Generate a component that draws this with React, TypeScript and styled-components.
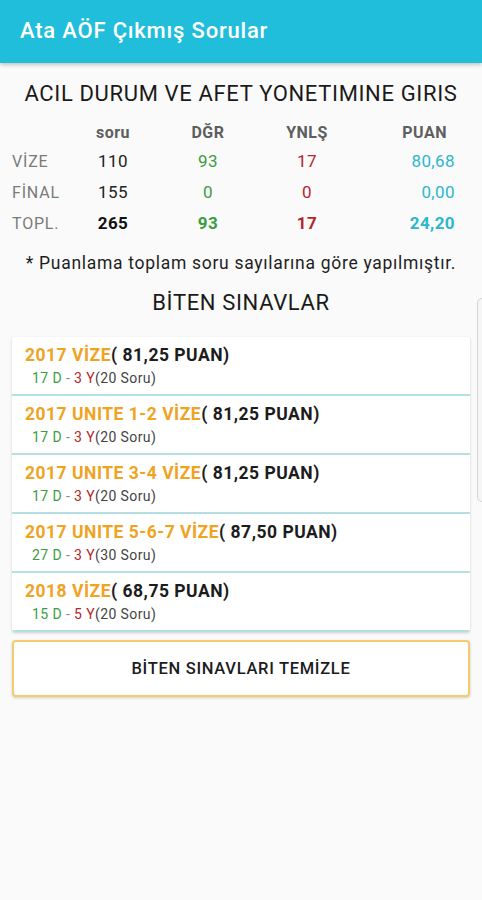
import React from 'react';
import styled, { createGlobalStyle } from 'styled-components';

const GlobalStyle = createGlobalStyle`
  html, body {
    margin: 0;
    padding: 0;
    background: #fafafa;
    font-family: Roboto, "Noto Sans", "Liberation Sans", sans-serif;
  }
`;

const Screen = styled.div`
  position: relative;
  width: 482px;
  min-height: 900px;
  background: #fafafa;
  overflow: hidden;
`;

const AppBar = styled.div`
  height: 63px;
  background: #21bedb;
  display: flex;
  align-items: center;
  padding-left: 20px;
  box-shadow: 0 2px 4px rgba(0, 0, 0, 0.22);
  position: relative;
  z-index: 1;
`;

const AppTitle = styled.h1`
  margin: 0;
  color: #fff;
  font-size: 22px;
  letter-spacing: 0.8px;
  font-weight: 500;
  padding-bottom: 2px;
`;

const Content = styled.div`
  padding: 0 12px;
  display: flex;
  flex-direction: column;
`;

const Heading = styled.div<{ $top: number }>`
  text-align: center;
  font-size: 22px;
  letter-spacing: 0.65px;
  color: #1a1a1a;
  margin-top: ${(p) => p.$top}px;
  line-height: 28px;
`;

const StatsGrid = styled.div`
  display: grid;
  grid-template-columns: 71px 60px 130px 68px 1fr;
  margin-top: 12px;
`;

const HeadCell = styled.div<{ $align?: string }>`
  height: 26px;
  line-height: 26px;
  font-size: 16px;
  letter-spacing: 0.5px;
  font-weight: 700;
  color: #5e5e5e;
  text-align: ${(p) => p.$align || 'center'};
  padding-right: ${(p) => (p.$align === 'right' ? '23px' : '0')};
`;

const Cell = styled.div<{ $color: string; $bold?: boolean; $align?: string }>`
  height: 31px;
  line-height: 31px;
  font-size: 17px;
  letter-spacing: 0.4px;
  color: ${(p) => p.$color};
  font-weight: ${(p) => (p.$bold ? 700 : 400)};
  text-align: ${(p) => p.$align || 'center'};
  padding-right: ${(p) => (p.$align === 'right' ? '15px' : '0')};
`;

const RowLabel = styled.div`
  height: 31px;
  line-height: 31px;
  font-size: 16px;
  letter-spacing: 0.8px;
  color: #7a7a7a;
`;

const Note = styled.div`
  text-align: center;
  font-size: 17.5px;
  letter-spacing: 0.7px;
  color: #1e1e1e;
  margin-top: 13px;
  line-height: 22px;
`;

const Card = styled.div`
  margin-top: 20px;
  background: #fff;
  border-radius: 3px;
  box-shadow: 0 1px 3px rgba(0, 0, 0, 0.18);
  overflow: hidden;
`;

const ExamItem = styled.div`
  height: 59px;
  border-bottom: 2px solid #b4e0e3;
  padding: 8px 13px 0;
  box-sizing: border-box;
`;

const ExamTitle = styled.div`
  font-size: 17.5px;
  letter-spacing: 0.5px;
  font-weight: 700;
  color: #1c1c1c;
  line-height: 21px;
`;

const ExamName = styled.span`
  color: #f0a31f;
`;

const ExamSub = styled.div`
  font-size: 14px;
  letter-spacing: 0.4px;
  color: #444;
  margin-top: 4px;
  padding-left: 7px;
  line-height: 17px;
`;

const Tone = styled.span<{ $color: string }>`
  color: ${(p) => p.$color};
`;

const ClearButton = styled.button`
  margin-top: 8px;
  height: 57px;
  background: #fff;
  border: 2px solid #f2cc6e;
  border-radius: 4px;
  box-shadow: 0 1px 3px rgba(0, 0, 0, 0.18);
  font-family: inherit;
  font-size: 16.5px;
  letter-spacing: 0.7px;
  font-weight: 500;
  color: #1c1c1c;
  cursor: pointer;
`;

const EdgeHandle = styled.div`
  position: absolute;
  left: 477px;
  top: 298px;
  width: 10px;
  height: 202px;
  border: 1px solid #d6d6d6;
  border-radius: 5px;
  background: #f6f6f6;
`;

const GREEN = '#3b9d3f';
const RED = '#b3262c';
const TEAL = '#2cb7cb';
const DARK = '#222';

const rows = [
  { label: 'VİZE', soru: '110', d: '93', y: '17', p: '80,68', bold: false },
  { label: 'FİNAL', soru: '155', d: '0', y: '0', p: '0,00', bold: false },
  { label: 'TOPL.', soru: '265', d: '93', y: '17', p: '24,20', bold: true },
];

const exams = [
  { name: '2017 VİZE', puan: '81,25', d: 17, y: 3, n: 20 },
  { name: '2017 UNITE 1-2 VİZE', puan: '81,25', d: 17, y: 3, n: 20 },
  { name: '2017 UNITE 3-4 VİZE', puan: '81,25', d: 17, y: 3, n: 20 },
  { name: '2017 UNITE 5-6-7 VİZE', puan: '87,50', d: 27, y: 3, n: 30 },
  { name: '2018 VİZE', puan: '68,75', d: 15, y: 5, n: 20 },
];

export default function App() {
  return (
    <Screen>
      <GlobalStyle />
      <AppBar>
        <AppTitle>Ata AÖF Çıkmış Sorular</AppTitle>
      </AppBar>
      <Content>
        <Heading $top={17}>ACIL DURUM VE AFET YONETIMINE GIRIS</Heading>
        <StatsGrid>
          <HeadCell />
          <HeadCell>soru</HeadCell>
          <HeadCell>DĞR</HeadCell>
          <HeadCell>YNLŞ</HeadCell>
          <HeadCell $align="right">PUAN</HeadCell>
          {rows.map((r) => (
            <React.Fragment key={r.label}>
              <RowLabel>{r.label}</RowLabel>
              <Cell $color={r.bold ? '#111' : DARK} $bold={r.bold}>{r.soru}</Cell>
              <Cell $color={GREEN} $bold={r.bold}>{r.d}</Cell>
              <Cell $color={RED} $bold={r.bold}>{r.y}</Cell>
              <Cell $color={TEAL} $bold={r.bold} $align="right">{r.p}</Cell>
            </React.Fragment>
          ))}
        </StatsGrid>
        <Note>* Puanlama toplam soru sayılarına göre yapılmıştır.</Note>
        <Heading $top={15}>BİTEN SINAVLAR</Heading>
        <Card>
          {exams.map((e) => (
            <ExamItem key={e.name}>
              <ExamTitle>
                <ExamName>{e.name}</ExamName>( {e.puan} PUAN)
              </ExamTitle>
              <ExamSub>
                <Tone $color={GREEN}>{e.d} D</Tone>
                <Tone $color="#888"> - </Tone>
                <Tone $color={RED}>{e.y} Y</Tone>({e.n} Soru)
              </ExamSub>
            </ExamItem>
          ))}
        </Card>
        <ClearButton>BİTEN SINAVLARI TEMİZLE</ClearButton>
      </Content>
      <EdgeHandle />
    </Screen>
  );
}
